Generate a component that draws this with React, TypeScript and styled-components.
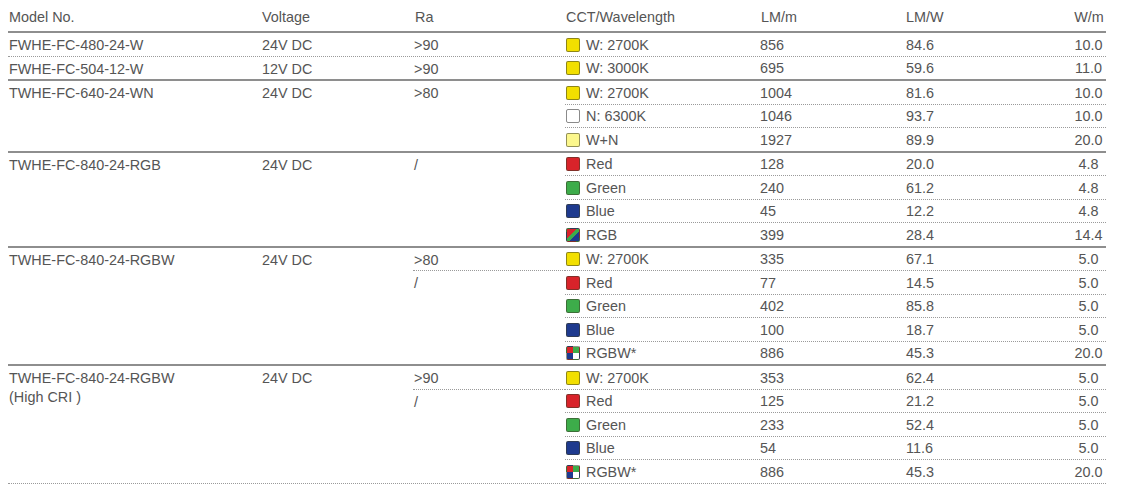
import styled, { createGlobalStyle } from "styled-components";

type Border = "none" | "dotted" | "solid";

interface SubRow {
  swatch: string;
  label: string;
  lmm: string;
  lmw: string;
  wm: string;
}

interface Group {
  model: string[];
  voltage: string;
  ra: string[];
  top: Border;
  rows: SubRow[];
}

const COLORS: Record<string, string> = {
  yellow: "#f2df00",
  white: "#ffffff",
  light: "#fcf78c",
  red: "#d8232a",
  green: "#3dac4a",
  blue: "#1e3a8e",
  rgb: "linear-gradient(135deg, #d8232a 0 38%, #3dac4a 38% 62%, #1e3a8e 62% 100%)",
  rgbw: "conic-gradient(#3dac4a 0 25%, #ffffff 25% 50%, #1e3a8e 50% 75%, #d8232a 75% 100%)",
};

const groups: Group[] = [
  {
    model: ["FWHE-FC-480-24-W"],
    voltage: "24V DC",
    ra: [">90"],
    top: "none",
    rows: [{ swatch: "yellow", label: "W: 2700K", lmm: "856", lmw: "84.6", wm: "10.0" }],
  },
  {
    model: ["FWHE-FC-504-12-W"],
    voltage: "12V DC",
    ra: [">90"],
    top: "dotted",
    rows: [{ swatch: "yellow", label: "W: 3000K", lmm: "695", lmw: "59.6", wm: "11.0" }],
  },
  {
    model: ["TWHE-FC-640-24-WN"],
    voltage: "24V DC",
    ra: [">80"],
    top: "solid",
    rows: [
      { swatch: "yellow", label: "W: 2700K", lmm: "1004", lmw: "81.6", wm: "10.0" },
      { swatch: "white", label: "N: 6300K", lmm: "1046", lmw: "93.7", wm: "10.0" },
      { swatch: "light", label: "W+N", lmm: "1927", lmw: "89.9", wm: "20.0" },
    ],
  },
  {
    model: ["TWHE-FC-840-24-RGB"],
    voltage: "24V DC",
    ra: ["/"],
    top: "solid",
    rows: [
      { swatch: "red", label: "Red", lmm: "128", lmw: "20.0", wm: "4.8" },
      { swatch: "green", label: "Green", lmm: "240", lmw: "61.2", wm: "4.8" },
      { swatch: "blue", label: "Blue", lmm: "45", lmw: "12.2", wm: "4.8" },
      { swatch: "rgb", label: "RGB", lmm: "399", lmw: "28.4", wm: "14.4" },
    ],
  },
  {
    model: ["TWHE-FC-840-24-RGBW"],
    voltage: "24V DC",
    ra: [">80", "/"],
    top: "solid",
    rows: [
      { swatch: "yellow", label: "W: 2700K", lmm: "335", lmw: "67.1", wm: "5.0" },
      { swatch: "red", label: "Red", lmm: "77", lmw: "14.5", wm: "5.0" },
      { swatch: "green", label: "Green", lmm: "402", lmw: "85.8", wm: "5.0" },
      { swatch: "blue", label: "Blue", lmm: "100", lmw: "18.7", wm: "5.0" },
      { swatch: "rgbw", label: "RGBW*", lmm: "886", lmw: "45.3", wm: "20.0" },
    ],
  },
  {
    model: ["TWHE-FC-840-24-RGBW", "(High CRI )"],
    voltage: "24V DC",
    ra: [">90", "/"],
    top: "solid",
    rows: [
      { swatch: "yellow", label: "W: 2700K", lmm: "353", lmw: "62.4", wm: "5.0" },
      { swatch: "red", label: "Red", lmm: "125", lmw: "21.2", wm: "5.0" },
      { swatch: "green", label: "Green", lmm: "233", lmw: "52.4", wm: "5.0" },
      { swatch: "blue", label: "Blue", lmm: "54", lmw: "11.6", wm: "5.0" },
      { swatch: "rgbw", label: "RGBW*", lmm: "886", lmw: "45.3", wm: "20.0" },
    ],
  },
];

const ROW_H = 22.5;
const DOT = "1px dotted #9a9a9a";
const SOLID = "2px solid #8e8e8e";

const GlobalStyle = createGlobalStyle`
  body {
    margin: 0;
    background: #ffffff;
    font-family: "Liberation Sans", Arial, sans-serif;
    font-size: 14.4px;
    color: #555555;
  }
`;

const Page = styled.div`
  padding-left: 8px;
`;

const Table = styled.div`
  width: 1098px;
`;

const HeaderRow = styled.div`
  display: grid;
  grid-template-columns: 254px 151px 152px 193px 147px 163px 38px;
  align-items: center;
  box-sizing: border-box;
  height: 33px;
  padding-top: 3px;
  border-bottom: ${SOLID};
`;

const HeadCell = styled.div<{ $pad?: number; $center?: boolean }>`
  padding-left: ${(p) => p.$pad ?? 0}px;
  text-align: ${(p) => (p.$center ? "center" : "left")};
  white-space: nowrap;
`;

const GroupRow = styled.div<{ $top: Border; $last?: boolean }>`
  display: flex;
  border-top: ${(p) => (p.$top === "solid" ? SOLID : p.$top === "dotted" ? DOT : "none")};
  border-bottom: ${(p) => (p.$last ? DOT : "none")};
`;

const ModelCell = styled.div`
  width: 254px;
  padding: 3px 0 0 1px;
  box-sizing: border-box;
  line-height: 19px;
`;

const VoltageCell = styled.div`
  width: 151px;
  height: ${ROW_H}px;
  line-height: ${ROW_H + 2}px;
`;

const RaColumn = styled.div`
  width: 152px;
  display: flex;
  flex-direction: column;
`;

const RaEntry = styled.div<{ $divided?: boolean }>`
  height: ${ROW_H}px;
  line-height: ${ROW_H + 2}px;
  padding-left: 1px;
  border-bottom: ${(p) => (p.$divided ? DOT : "none")};
`;

const SubRows = styled.div`
  flex: 1;
  display: flex;
  flex-direction: column;
`;

const SubRowLine = styled.div<{ $first: boolean }>`
  display: grid;
  grid-template-columns: 193px 147px 163px 38px;
  box-sizing: content-box;
  height: ${ROW_H - 1}px;
  padding-top: 1px;
  align-items: center;
  border-top: ${(p) => (p.$first ? "none" : DOT)};
`;

const Cell = styled.div<{ $pad?: number; $center?: boolean }>`
  padding-left: ${(p) => p.$pad ?? 0}px;
  text-align: ${(p) => (p.$center ? "center" : "left")};
  white-space: nowrap;
`;

const Wave = styled.div`
  display: flex;
  align-items: center;
  padding-left: 1px;
`;

const Swatch = styled.span<{ $fill: string; $edge?: string }>`
  width: 14px;
  height: 14px;
  box-sizing: border-box;
  border: 1px solid ${(p) => p.$edge ?? "rgba(60, 60, 40, 0.55)"};
  border-radius: 2px;
  background: ${(p) => p.$fill};
  margin-right: 6px;
  flex-shrink: 0;
`;

export default function App() {
  return (
    <Page>
      <GlobalStyle />
      <Table>
        <HeaderRow>
          <HeadCell $pad={1}>Model No.</HeadCell>
          <HeadCell>Voltage</HeadCell>
          <HeadCell $pad={2}>Ra</HeadCell>
          <HeadCell $pad={1}>CCT/Wavelength</HeadCell>
          <HeadCell $pad={3}>LM/m</HeadCell>
          <HeadCell $pad={1}>LM/W</HeadCell>
          <HeadCell $pad={4} $center>W/m</HeadCell>
        </HeaderRow>

        {groups.map((group, gi) => (
          <GroupRow key={gi} $top={group.top} $last={gi === groups.length - 1}>
            <ModelCell>
              {group.model.map((line) => (
                <div key={line}>{line}</div>
              ))}
            </ModelCell>
            <VoltageCell>{group.voltage}</VoltageCell>
            <RaColumn>
              {group.ra.map((ra, ri) => (
                <RaEntry key={ri} $divided={ri < group.ra.length - 1}>
                  {ra}
                </RaEntry>
              ))}
            </RaColumn>
            <SubRows>
              {group.rows.map((row, ri) => (
                <SubRowLine key={ri} $first={ri === 0}>
                  <Wave>
                    <Swatch
                      $fill={COLORS[row.swatch]}
                      $edge={row.swatch === "white" ? "#8a8a8a" : undefined}
                    />
                    {row.label}
                  </Wave>
                  <Cell $pad={2}>{row.lmm}</Cell>
                  <Cell $pad={1}>{row.lmw}</Cell>
                  <Cell $pad={3} $center>{row.wm}</Cell>
                </SubRowLine>
              ))}
            </SubRows>
          </GroupRow>
        ))}
      </Table>
    </Page>
  );
}
